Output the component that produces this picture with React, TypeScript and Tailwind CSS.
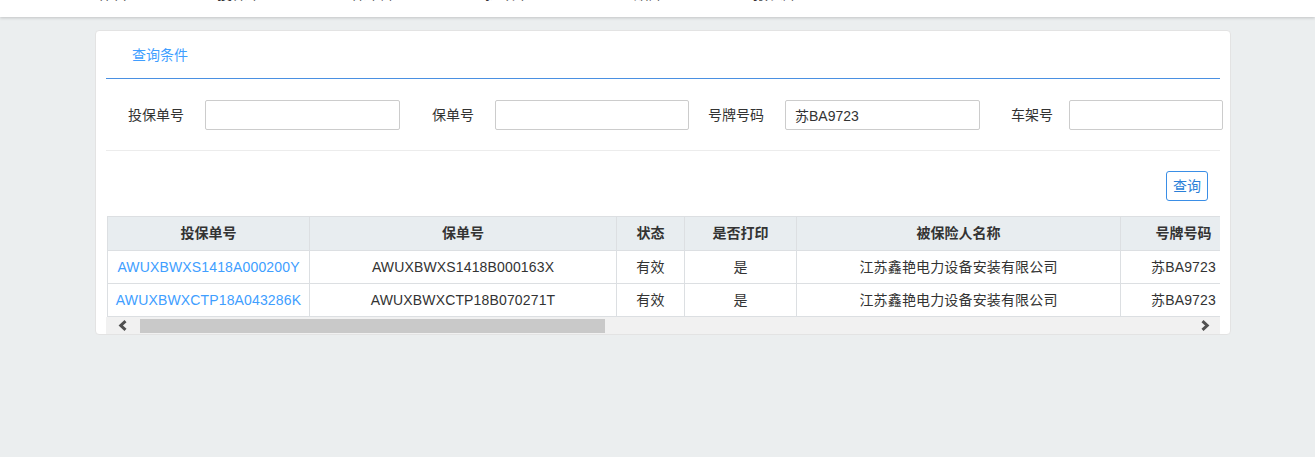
import React from "react";

const navItems = ["工作台", "投保单", "保单库", "批改单", "理赔库", "报表库"];

const columns = [
  { title: "投保单号", w: "w-[202px]" },
  { title: "保单号", w: "w-[307px]" },
  { title: "状态", w: "w-[68px]" },
  { title: "是否打印", w: "w-[112px]" },
  { title: "被保险人名称", w: "w-[324px]" },
  { title: "号牌号码", w: "w-[126px]" },
  { title: "车架号", w: "w-[220px]" },
  { title: "起保日期", w: "w-[200px]" },
  { title: "终保日期", w: "w-[200px]" },
  { title: "保费", w: "w-[150px]" },
  { title: "录入人", w: "w-[150px]" },
  { title: "操作", w: "w-[340px]" },
];

const rows = [
  ["AWUXBWXS1418A000200Y", "AWUXBWXS1418B000163X", "有效", "是", "江苏鑫艳电力设备安装有限公司", "苏BA9723", "LGBF5AE04HR123456", "2018-03-01", "2019-02-28", "950.00", "张敏", "打印"],
  ["AWUXBWXCTP18A043286K", "AWUXBWXCTP18B070271T", "有效", "是", "江苏鑫艳电力设备安装有限公司", "苏BA9723", "LGBF5AE04HR123456", "2018-03-01", "2019-02-28", "950.00", "张敏", "打印"],
];

function Chevron({ dir }: { dir: "left" | "right" }) {
  return (
    <svg width="10" height="11" viewBox="0 0 10 11">
      <polyline
        points={dir === "left" ? "7.5,1.2 2.8,5.5 7.5,9.8" : "2.5,1.2 7.2,5.5 2.5,9.8"}
        fill="none"
        stroke="#505050"
        strokeWidth="3"
      />
    </svg>
  );
}

export default function App() {
  return (
    <div
      className="min-h-[457px] bg-[#ebeeef] text-[14px] text-[#333]"
      style={{ fontFamily: '"Liberation Sans", "Noto Sans CJK SC", sans-serif' }}
    >
      {/* top nav, scrolled so only the bottom of its labels shows */}
      <div className="h-[17px] overflow-hidden bg-white shadow-[0_1px_3px_rgba(0,0,0,0.18)] relative z-10">
        <div className="flex pl-[83px] -mt-[14px] text-[15px] leading-[15px] text-[#333]">
          {navItems.map((t) => (
            <div key={t} className="w-[134px]">
              {t}
            </div>
          ))}
        </div>
      </div>

      <div className="pt-[13px] pl-[95px] pb-[124px]">
        <div className="w-[1136px] bg-white border border-[#e3e3e3] rounded-[4px] px-[10px]">
          {/* tab header */}
          <div className="h-[48px] border-b border-[#4a90e2] flex items-center pl-[26px]">
            <span className="text-[#409eff] text-[14px] leading-[14px]">查询条件</span>
          </div>

          {/* search form */}
          <div className="flex items-center pt-[21px] pb-[20px] border-b border-[#ececec] whitespace-nowrap">
            <span className="ml-[22px] mr-[21px]">投保单号</span>
            <input className="w-[195px] h-[30px] border border-[#ccc] rounded-[2px] px-[10px] outline-none" />
            <span className="ml-[32px] mr-[21px]">保单号</span>
            <input className="w-[194px] h-[30px] border border-[#ccc] rounded-[2px] px-[10px] outline-none" />
            <span className="ml-[19px] mr-[21px]">号牌号码</span>
            <input
              defaultValue="苏BA9723"
              className="w-[195px] h-[30px] border border-[#ccc] rounded-[2px] px-[9px] outline-none text-[#333]"
            />
            <span className="ml-[31px] mr-[16px]">车架号</span>
            <input className="w-[154px] h-[30px] border border-[#ccc] rounded-[2px] px-[10px] outline-none shrink-0" />
          </div>

          {/* actions */}
          <div className="flex justify-end pt-[20px] pb-[15px] pr-[12px]">
            <button className="h-[30px] px-[6px] border border-[#3a8ee6] rounded-[3px] text-[#2a7fd8] bg-white leading-[28px]">
              查询
            </button>
          </div>

          {/* result table */}
          <div className="w-[1114px]">
            <div className="overflow-hidden pl-[1px]">
              <table className="table-fixed border-collapse w-[2399px]">
                <thead>
                  <tr className="bg-[#e8edf0]">
                    {columns.map((c) => (
                      <th
                        key={c.title}
                        className={`${c.w} h-[34px] border border-[#dcdfe2] font-bold text-center p-0 text-[#333]`}
                      >
                        {c.title}
                      </th>
                    ))}
                  </tr>
                </thead>
                <tbody>
                  {rows.map((r, i) => (
                    <tr key={i}>
                      {r.map((cell, j) => (
                        <td
                          key={j}
                          className={`h-[33px] border border-[#dcdfe2] text-center p-0 whitespace-nowrap tracking-[0.15px] ${
                            j === 0 ? "text-[#409eff]" : "text-[#333]"
                          }`}
                        >
                          {cell}
                        </td>
                      ))}
                    </tr>
                  ))}
                </tbody>
              </table>
            </div>

            {/* horizontal scrollbar */}
            <div className="h-[17px] bg-[#f1f1f1] flex items-center">
              <div className="w-[34px] flex justify-center">
                <Chevron dir="left" />
              </div>
              <div className="flex-1 h-[14px] flex">
                <div className="w-[465px] h-[14px] bg-[#c9c9c9]" />
              </div>
              <div className="w-[31px] flex justify-center">
                <Chevron dir="right" />
              </div>
            </div>
          </div>
        </div>
      </div>
    </div>
  );
}
